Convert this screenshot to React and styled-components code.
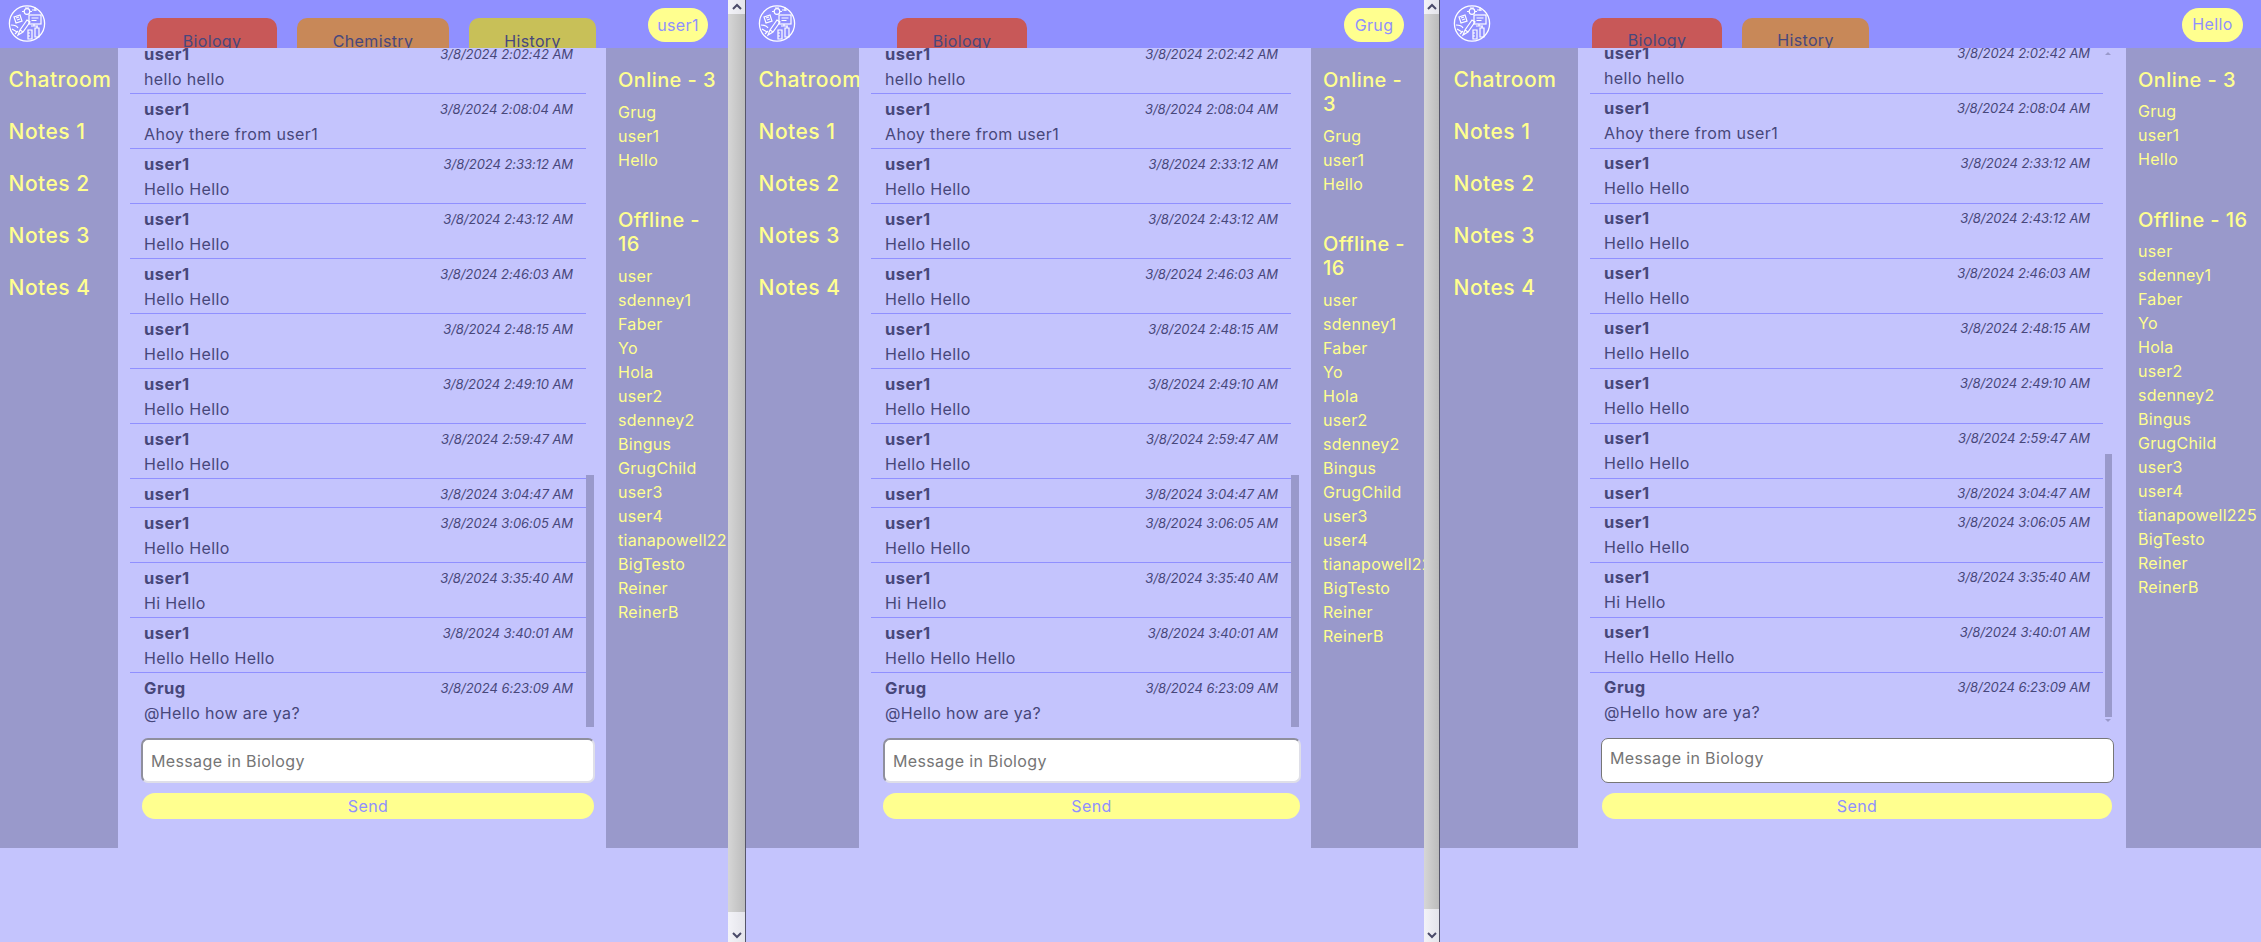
import React from 'react';
import styled, { createGlobalStyle } from 'styled-components';

const GlobalStyle = createGlobalStyle`
  html, body {
    margin: 0;
    padding: 0;
    height: 942px;
    overflow: hidden;
    background: #c4c4fd;
  }
  body, input, button {
    font-family: Inter, "Open Sans", sans-serif;
  }
`;

const Desktop = styled.div`
  display: flex;
  width: 2261px;
  height: 942px;
  overflow: hidden;
`;

const Window = styled.section`
  flex: 0 0 ${(p) => p.$width}px;
  display: flex;
  height: 942px;
  overflow: hidden;
  background: #c4c4fd;
`;

const Page = styled.div`
  flex: 1;
  min-width: 0;
  overflow: hidden;
`;

const Header = styled.header`
  display: flex;
  align-items: flex-start;
  height: 48px;
  background: #9090ff;
`;

const LogoWrap = styled.div`
  flex: 0 0 ${(p) => p.$w}px;
  padding: 5px 0 0 ${(p) => p.$x}px;
  box-sizing: border-box;
`;

const Tabs = styled.nav`
  display: flex;
  gap: ${(p) => p.$gap}px;
  padding-top: 18px;
`;

const Tab = styled.div`
  width: ${(p) => p.$w}px;
  height: 30px;
  box-sizing: border-box;
  overflow: hidden;
  border-radius: 10px 10px 0 0;
  background: ${(p) => p.$color};
  color: #47477d;
  font-size: 16px;
  letter-spacing: 0.36px;
  line-height: 20px;
  text-align: center;
  padding-top: ${(p) => (p.$late ? 12 : 13)}px;
`;

const Pill = styled.div`
  width: ${(p) => p.$w}px;
  height: 34px;
  margin: 8px ${(p) => p.$right}px 0 auto;
  border-radius: 17px;
  background: #ffff8f;
  color: #9090ff;
  font-size: 16px;
  letter-spacing: 0.36px;
  line-height: ${(p) => (p.$late ? 32 : 34)}px;
  text-align: center;
`;

const Columns = styled.div`
  display: grid;
  grid-template-columns: ${(p) => p.$left}px ${(p) => p.$main}px 1fr;
  height: 800px;
`;

const SideBar = styled.aside`
  background: #9999cb;
  color: #ffff8f;
  overflow: hidden;
  white-space: nowrap;
  padding: 19px 0 0 ${(p) => p.$x}px;
`;

const NavLink = styled.div`
  font-size: 21px;
  font-weight: 500;
  letter-spacing: 0.5px;
  line-height: 26px;
  margin-bottom: 26px;
`;

const MainPane = styled.main`
  background: #c4c4fd;
  padding: 0 ${(p) => p.$right}px 0 ${(p) => p.$left}px;
`;

const MessageList = styled.div`
  position: relative;
  height: 679px;
  overflow: hidden;
  padding-right: ${(p) => p.$gutter}px;
`;

const Messages = styled.div`
  margin-top: -9px;
`;

const Row = styled.article`
  box-sizing: border-box;
  height: ${(p) => (p.$short ? 29 : 55)}px;
  padding: 5px 13px 0 14px;
  border-bottom: 1px solid #9090ff;
  color: #47477a;

  &:last-child {
    margin-left: ${(p) => p.$lastInset}px;
    padding-left: ${(p) => 14 - p.$lastInset}px;
  }
`;

const RowTop = styled.div`
  display: flex;
  justify-content: space-between;
  align-items: center;
  height: 20px;
  position: relative;
  top: ${(p) => (p.$late ? -1 : 0)}px;
`;

const Author = styled.strong`
  font-size: 16.5px;
  font-weight: 700;
  letter-spacing: 0.5px;
`;

const Stamp = styled.time`
  font-size: 13px;
  font-style: italic;
  letter-spacing: -0.05px;
`;

const Body = styled.p`
  margin: 5px 0 0;
  font-size: 16px;
  letter-spacing: 0.36px;
  line-height: 20px;
  position: relative;
  top: ${(p) => (p.$late ? -1 : 0)}px;
`;

const ListThumb = styled.div`
  position: absolute;
  right: ${(p) => p.$right}px;
  top: ${(p) => p.$top}px;
  bottom: ${(p) => p.$bottom}px;
  width: ${(p) => p.$w}px;
  background: #9999cb;
`;

const ListArrow = styled.div`
  position: absolute;
  right: ${(p) => p.$right}px;
  ${(p) => (p.$down ? 'bottom: 5px;' : 'top: 4px;')}
  width: 0;
  height: 0;
  border-left: 3px solid transparent;
  border-right: 3px solid transparent;
  ${(p) => (p.$down ? 'border-top' : 'border-bottom')}: 3px solid #9999cb;
`;

const Composer = styled.form`
  display: flex;
  flex-direction: column;
  gap: 10px;
  margin: 11px ${(p) => p.$outdent}px 0 ${(p) => p.$indent}px;
`;

const MessageInput = styled.input`
  box-sizing: border-box;
  height: 45px;
  width: 100%;
  margin: 0;
  padding: ${(p) => (p.$flat ? '0 0 5px 8px' : '0 0 0 8px')};
  border-radius: 7px;
  background: #fff;
  font-size: 16px;
  letter-spacing: 0.36px;
  outline: none;
  border-style: solid;
  border-width: ${(p) => (p.$flat ? 1 : 2)}px;
  border-color: ${(p) => (p.$flat ? '#767676' : '#8f8f9d #dfdfe8 #dfdfe8 #8f8f9d')};

  &::placeholder {
    color: #757575;
    opacity: 1;
  }
`;

const SendButton = styled.button`
  height: 26px;
  margin: 0 ${(p) => p.$r}px 0 ${(p) => p.$l}px;
  padding: 0;
  border: none;
  border-radius: 13px;
  background: #ffff8f;
  color: #9090ff;
  font-size: 16px;
  letter-spacing: 0.36px;
`;

const Roster = styled.aside`
  background: #9999cb;
  color: #ffff8f;
  overflow: hidden;
  padding: 20px 12px 0 ${(p) => p.$x}px;
`;

const RosterTitle = styled.h3`
  margin: 0 0 ${(p) => (p.$late ? 7 : 8)}px;
  font-size: 20px;
  font-weight: 500;
  letter-spacing: 0.43px;
  line-height: 24px;
`;

const RosterGroup = styled.ul`
  list-style: none;
  margin: 0 0 ${(p) => (p.$late ? 37 : 36)}px;
  padding: 0;
`;

const RosterName = styled.li`
  font-size: 16px;
  letter-spacing: 0.3px;
  line-height: 24px;
  white-space: nowrap;
`;

const BrowserBar = styled.div`
  flex: 0 0 ${(p) => p.$w}px;
  box-sizing: border-box;
  display: flex;
  flex-direction: column;
  height: 942px;
  border-right: 1px solid #55556a;
  background: linear-gradient(90deg, #d6d6d6, #bcbcbc);
`;

const BarButton = styled.div`
  flex: 0 0 ${(p) => p.$h}px;
  display: flex;
  justify-content: center;
  align-items: ${(p) => (p.$down ? 'flex-end' : 'flex-start')};
  background: linear-gradient(90deg, #f3f3f8, #e4e4ea);
  color: #4a4a68;
`;

const BarTrack = styled.div`
  flex: 1;
`;

const Chevron = ({ down }) => (
  <svg width="12" height="8" viewBox="0 0 12 8" style={{ margin: '3px 0' }}>
    <path
      d={down ? 'M2 2l4 4 4-4' : 'M2 6l4-4 4 4'}
      fill="none"
      stroke="currentColor"
      strokeWidth="2"
    />
  </svg>
);

// little study-themed emblem from the header
const Logo = () => (
  <svg width="38" height="37" viewBox="0 0 38 37" fill="none" stroke="#fff" strokeWidth="1.2">
    <circle cx="19" cy="18.5" r="17.6" strokeWidth="1.3" />
    <circle cx="19" cy="6.5" r="2.8" />
    <path d="M17 3h4M16 6.5h-2M22 6.5h2" />
    <path d="M6 12l6-2 2 6-6 2zM8 13l3-1M9 15l3-1" />
    <rect x="21" y="10" width="12" height="9" />
    <path d="M23.5 13h7M23.5 15.5h5M26 19v2h-3M26 21h4" />
    <path d="M24 5h5M27 2v4" />
    <path d="M10 30l2-5 7-10 3 2-7 10zM12 25l3 2" />
    <path d="M3 20c3 0 6 1 7 3M4 24l5 3M7 29l3-3" />
    <path d="M20 25h4v9h-4zM20 28h2M20 31h2" />
    <path d="M27 23h4v9h-4zM29 23v-2" />
  </svg>
);

const rows = [
  ['user1', '3/8/2024 2:02:42 AM', 'hello hello'],
  ['user1', '3/8/2024 2:08:04 AM', 'Ahoy there from user1'],
  ['user1', '3/8/2024 2:33:12 AM', 'Hello Hello'],
  ['user1', '3/8/2024 2:43:12 AM', 'Hello Hello'],
  ['user1', '3/8/2024 2:46:03 AM', 'Hello Hello'],
  ['user1', '3/8/2024 2:48:15 AM', 'Hello Hello'],
  ['user1', '3/8/2024 2:49:10 AM', 'Hello Hello'],
  ['user1', '3/8/2024 2:59:47 AM', 'Hello Hello'],
  ['user1', '3/8/2024 3:04:47 AM', ''],
  ['user1', '3/8/2024 3:06:05 AM', 'Hello Hello'],
  ['user1', '3/8/2024 3:35:40 AM', 'Hi Hello'],
  ['user1', '3/8/2024 3:40:01 AM', 'Hello Hello Hello'],
  ['Grug', '3/8/2024 6:23:09 AM', '@Hello how are ya?'],
];

const online = ['Grug', 'user1', 'Hello'];
const offline = [
  'user', 'sdenney1', 'Faber', 'Yo', 'Hola', 'user2', 'sdenney2', 'Bingus', 'GrugChild',
  'user3', 'user4', 'tianapowell225', 'BigTesto', 'Reiner', 'ReinerB',
];
const notes = ['Chatroom', 'Notes 1', 'Notes 2', 'Notes 3', 'Notes 4'];

const RED = '#c85858';
const ORANGE = '#c88858';
const OLIVE = '#c8c058';

const views = [
  {
    width: 746, bar: 18, barBottom: 30, user: 'user1', pillW: 60, pillR: 20,
    left: 118, main: 488, logoX: 8, navX: 8.5, rosterX: 12, logoW: 147, tabGap: 20,
    tabs: [['Biology', RED, 130], ['Chemistry', ORANGE, 152], ['History', OLIVE, 127]],
    listL: 12, listR: 12, gutter: 8, thumb: { right: 0, w: 8, top: 427, bottom: 0 },
    lastInset: 6, composerL: 11, composerR: -1, sendL: 1, sendR: 1,
  },
  {
    width: 694, bar: 16, barBottom: 33, user: 'Grug', pillW: 60, pillR: 20,
    left: 113, main: 452, logoX: 12, navX: 12.5, rosterX: 12, logoW: 151, tabGap: 20,
    tabs: [['Biology', RED, 130]],
    listL: 12, listR: 12, gutter: 8, thumb: { right: 0, w: 8, top: 427, bottom: 0 },
    lastInset: 6, composerL: 12, composerR: -2, sendL: 0, sendR: 1,
  },
  {
    width: 821, user: 'Hello', pillW: 61, pillR: 18, late: true,
    left: 138, main: 548, logoX: 13, navX: 13.5, rosterX: 12, logoW: 152, tabGap: 20,
    tabs: [['Biology', RED, 130], ['History', ORANGE, 127]],
    listL: 12, listR: 14, gutter: 9, thumb: { right: 0, w: 7, top: 406, bottom: 10 },
    arrows: true, lastInset: 5, composerL: 11, composerR: -2, sendL: 1, sendR: 2, flat: true,
  },
];

const ChatView = ({ view }) => (
  <Window $width={view.width}>
    <Page>
      <Header>
        <LogoWrap $w={view.logoW} $x={view.logoX}>
          <Logo />
        </LogoWrap>
        <Tabs $gap={view.tabGap}>
          {view.tabs.map(([name, color, w]) => (
            <Tab key={name} $color={color} $w={w} $late={view.late}>
              {name}
            </Tab>
          ))}
        </Tabs>
        <Pill $w={view.pillW} $right={view.pillR} $late={view.late}>
          {view.user}
        </Pill>
      </Header>
      <Columns $left={view.left} $main={view.main}>
        <SideBar $x={view.navX}>
          {notes.map((n) => (
            <NavLink key={n}>{n}</NavLink>
          ))}
        </SideBar>
        <MainPane $left={view.listL} $right={view.listR}>
          <MessageList $gutter={view.gutter}>
            <Messages>
              {rows.map(([who, when, text]) => (
                <Row key={when} $short={!text} $lastInset={view.lastInset}>
                  <RowTop $late={view.late}>
                    <Author>{who}</Author>
                    <Stamp>{when}</Stamp>
                  </RowTop>
                  {text && <Body $late={view.late}>{text}</Body>}
                </Row>
              ))}
            </Messages>
            <ListThumb
              $right={view.thumb.right}
              $w={view.thumb.w}
              $top={view.thumb.top}
              $bottom={view.thumb.bottom}
            />
            {view.arrows && <ListArrow $right={1} />}
            {view.arrows && <ListArrow $right={1} $down />}
          </MessageList>
          <Composer $indent={view.composerL} $outdent={view.composerR}>
            <MessageInput placeholder="Message in Biology" $flat={view.flat} />
            <SendButton type="button" $l={view.sendL} $r={view.sendR}>
              Send
            </SendButton>
          </Composer>
        </MainPane>
        <Roster $x={view.rosterX}>
          <RosterTitle $late={view.late}>Online - 3</RosterTitle>
          <RosterGroup $late={view.late}>
            {online.map((n) => (
              <RosterName key={n}>{n}</RosterName>
            ))}
          </RosterGroup>
          <RosterTitle $late={view.late}>Offline - 16</RosterTitle>
          <RosterGroup $late={view.late}>
            {offline.map((n) => (
              <RosterName key={n}>{n}</RosterName>
            ))}
          </RosterGroup>
        </Roster>
      </Columns>
    </Page>
    {view.bar && (
      <BrowserBar $w={view.bar}>
        <BarButton $h={13}>
          <Chevron />
        </BarButton>
        <BarTrack />
        <BarButton $h={view.barBottom} $down>
          <Chevron down />
        </BarButton>
      </BrowserBar>
    )}
  </Window>
);

const App = () => (
  <>
    <GlobalStyle />
    <Desktop>
      {views.map((v) => (
        <ChatView key={v.user} view={v} />
      ))}
    </Desktop>
  </>
);

export default App;
